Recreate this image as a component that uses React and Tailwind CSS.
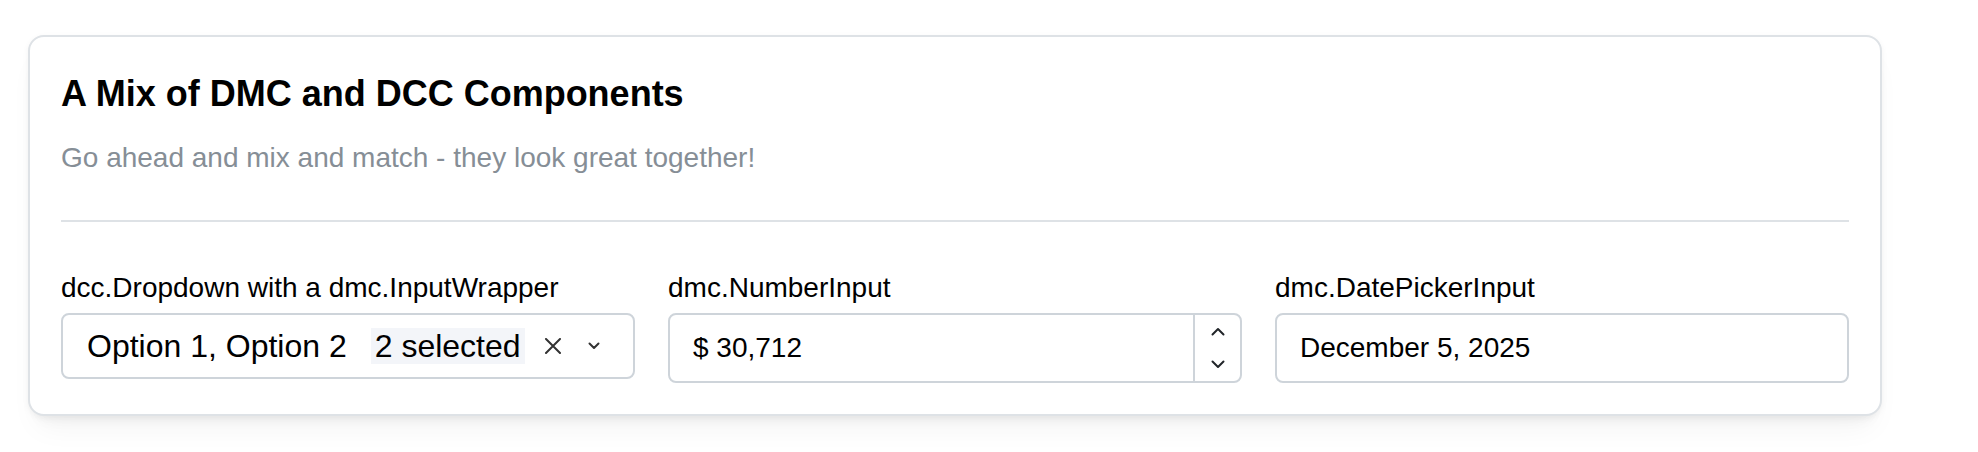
import React from "react";

const font = { fontFamily: '"Liberation Sans", Arial, sans-serif' };

const ClearIcon = () => (
  <svg width="18" height="16" viewBox="0 0 18 16" fill="none" stroke="#333" strokeWidth="2" strokeLinecap="round">
    <path d="M2 1 L16 15 M16 1 L2 15" />
  </svg>
);

const CaretIcon = () => (
  <svg width="12" height="8" viewBox="0 0 12 8" fill="none" stroke="#333" strokeWidth="2" strokeLinecap="round" strokeLinejoin="round">
    <path d="M1.5 1.5 L6 6 L10.5 1.5" />
  </svg>
);

const Chevron = ({ up }) => (
  <svg width="14" height="9" viewBox="0 0 14 9" fill="none" stroke="#212529" strokeWidth="2" strokeLinecap="round" strokeLinejoin="round">
    <path d={up ? "M1.5 7.5 L7 2 L12.5 7.5" : "M1.5 1.5 L7 7 L12.5 1.5"} />
  </svg>
);

const Field = ({ label, children }) => (
  <div className="flex flex-col">
    <label className="text-[28px] leading-[34px] text-black">{label}</label>
    <div className="mt-[8px]">{children}</div>
  </div>
);

export default function App() {
  return (
    <div className="min-h-[452px] w-[1978px] bg-white pt-[35px] pl-[28px]" style={font}>
      <div className="w-[1854px] rounded-[16px] border-2 border-[#dee2e6] bg-white px-[31px] pt-[31px] pb-[31px] shadow-[0_2px_6px_rgba(0,0,0,0.05),0_20px_30px_-10px_rgba(0,0,0,0.05),0_14px_14px_-10px_rgba(0,0,0,0.04)]">
        <h4 className="text-[36px] leading-[52px] font-bold text-black">A Mix of DMC and DCC Components</h4>
        <p className="mt-[16px] text-[28px] leading-[43px] text-[#868e96]">
          Go ahead and mix and match - they look great together!
        </p>
        <div className="mt-[41px] h-[2px] bg-[#dee2e6]" />

        <div className="mt-[49px] grid grid-cols-3 gap-x-[33px]">
          <Field label="dcc.Dropdown with a dmc.InputWrapper">
            <div className="flex h-[66px] items-center rounded-[8px] border-2 border-[#ced4da] bg-white pl-[24px] text-[32px] text-black">
              <span className="whitespace-nowrap">Option 1, Option 2</span>
              <span className="ml-[24px] flex h-[36px] items-center bg-[#f3f5f9] px-[4px] whitespace-nowrap">2 selected</span>
              <span className="ml-[19px] flex items-center"><ClearIcon /></span>
              <span className="ml-[26px] flex items-center"><CaretIcon /></span>
            </div>
          </Field>

          <Field label="dmc.NumberInput">
            <div className="flex h-[70px] items-stretch rounded-[8px] border-2 border-[#ced4da] bg-white">
              <div className="flex flex-1 items-center pl-[23px] text-[28px] text-black">$ 30,712</div>
              <div className="flex w-[47px] flex-col border-l-2 border-[#ced4da]">
                <div className="flex flex-1 items-center justify-center"><Chevron up /></div>
                <div className="flex flex-1 items-center justify-center"><Chevron /></div>
              </div>
            </div>
          </Field>

          <Field label="dmc.DatePickerInput">
            <div className="flex h-[70px] items-center rounded-[8px] border-2 border-[#ced4da] bg-white pl-[23px] text-[28px] text-black">
              December 5, 2025
            </div>
          </Field>
        </div>
      </div>
    </div>
  );
}
